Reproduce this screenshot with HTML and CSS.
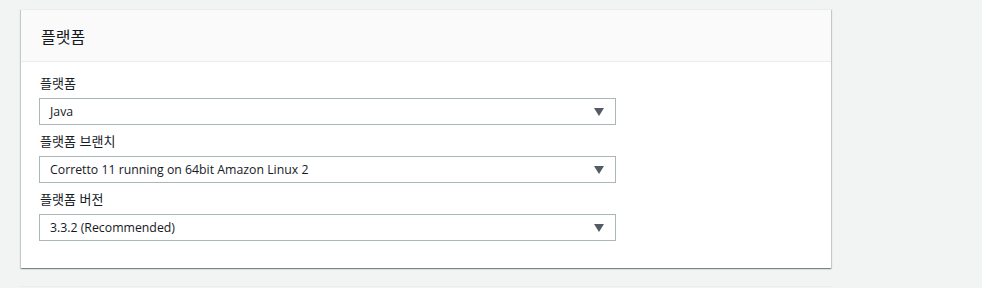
FILE: index.html
```html
<!DOCTYPE html>
<html lang="ko">
<head>
<meta charset="utf-8">
<title>플랫폼</title>
<link rel="stylesheet" href="styles.css">
</head>
<body>
<main class="page">
  <section class="card">
    <header class="card-header">
      <h2 class="card-title">플랫폼</h2>
    </header>
    <div class="card-body">
      <div class="field">
        <label class="field-label">플랫폼</label>
        <div class="select">
          <span class="select-value">Java</span>
          <span class="caret"></span>
        </div>
      </div>
      <div class="field">
        <label class="field-label">플랫폼 브랜치</label>
        <div class="select">
          <span class="select-value">Corretto 11 running on 64bit Amazon Linux 2</span>
          <span class="caret"></span>
        </div>
      </div>
      <div class="field">
        <label class="field-label">플랫폼 버전</label>
        <div class="select">
          <span class="select-value">3.3.2 (Recommended)</span>
          <span class="caret"></span>
        </div>
      </div>
    </div>
  </section>
  <section class="card card-next"></section>
</main>
</body>
</html>
```

FILE: styles.css
```css
* { box-sizing: border-box; }
html, body {
  margin: 0;
  padding: 0;
  background: #f2f3f3;
  font-family: "Open Sans", "Noto Sans CJK KR", sans-serif;
  color: #16191f;
}
.page {
  padding: 9px 0 0 21px;
  display: flex;
  flex-direction: column;
  gap: 18px;
}
.card {
  width: 810px;
  background: #fff;
  border-top: 1px solid #eaeded;
  box-shadow: 0 1px 1px 0 rgba(0, 28, 36, 0.3), 1px 1px 1px 0 rgba(0, 28, 36, 0.15), -1px 1px 1px 0 rgba(0, 28, 36, 0.15);
}
.card-header {
  background: #fafafa;
  border-bottom: 1px solid #eaeded;
  height: 52px;
  display: flex;
  align-items: center;
  padding: 0 20px;
}
.card-title {
  margin: 0;
  font-family: "Noto Sans CJK KR", sans-serif;
  font-size: 16px;
  font-weight: 400;
  line-height: 22px;
}
.card-body {
  padding: 10px 19px 27px 18px;
  display: flex;
  flex-direction: column;
  gap: 5px;
}
.field {
  display: flex;
  flex-direction: column;
  gap: 4px;
}
.field-label {
  font-family: "Noto Sans CJK KR", sans-serif;
  font-size: 13px;
  line-height: 22px;
  padding-left: 1px;
}
.select {
  width: 577px;
  height: 27px;
  border: 1px solid #aab7b8;
  display: flex;
  align-items: center;
  justify-content: space-between;
  padding: 0 10px 0 10px;
  background: #fff;
}
.select-value {
  font-size: 12.3px;
  line-height: 20px;
}
.caret {
  width: 0;
  height: 0;
  border-left: 5px solid transparent;
  border-right: 5px solid transparent;
  border-top: 8px solid #545b64;
  margin-right: 1px;
}
.card-next {
  height: 1px;
}
```
